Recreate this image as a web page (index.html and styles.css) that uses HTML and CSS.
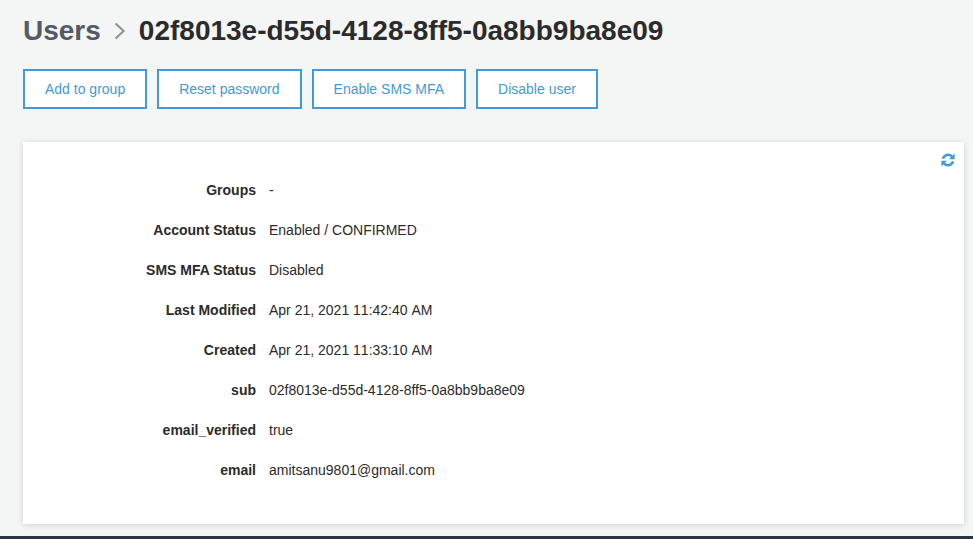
FILE: index.html
```html
<!DOCTYPE html>
<html lang="en">
<head>
    <meta charset="UTF-8">
    <meta name="viewport" content="width=device-width, initial-scale=1.0">
    <title>User details</title>
    <link rel="stylesheet" href="styles.css">
</head>
<body>
    <div class="content">
        <h1 class="crumbs">
            <span class="crumb-parent">Users</span>
            <svg class="crumb-sep" width="12" height="18" viewBox="0 0 12 18"><path d="M1.6 1.6l8 7.4-8 7.4" fill="none" stroke="#879196" stroke-width="2"/></svg>
            <span>02f8013e-d55d-4128-8ff5-0a8bb9ba8e09</span>
        </h1>
        <div class="actions">
            <button class="btn">Add to group</button>
            <button class="btn">Reset password</button>
            <button class="btn">Enable SMS MFA</button>
            <button class="btn">Disable user</button>
        </div>
        <div class="card">
            <svg class="refresh" width="14" height="14" viewBox="0 0 14 14">
                <path d="M2 5.8A5.2 5.2 0 0 1 11 3.6" fill="none" stroke="#3f9ddb" stroke-width="2.6"/>
                <path d="M13.6 .6v5.6H8z" fill="#3f9ddb"/>
                <path d="M12 8.2A5.2 5.2 0 0 1 3 10.4" fill="none" stroke="#3f9ddb" stroke-width="2.6"/>
                <path d="M.4 13.4V7.8H6z" fill="#3f9ddb"/>
            </svg>
            <dl class="attrs">
                <dt>Groups</dt><dd>-</dd>
                <dt>Account Status</dt><dd>Enabled / CONFIRMED</dd>
                <dt>SMS MFA Status</dt><dd>Disabled</dd>
                <dt>Last Modified</dt><dd class="date">Apr 21, 2021 11:42:40 AM</dd>
                <dt>Created</dt><dd class="date">Apr 21, 2021 11:33:10 AM</dd>
                <dt>sub</dt><dd>02f8013e-d55d-4128-8ff5-0a8bb9ba8e09</dd>
                <dt>email_verified</dt><dd>true</dd>
                <dt>email</dt><dd>amitsanu9801@gmail.com</dd>
            </dl>
        </div>
    </div>
    <div class="footer-bar"></div>
</body>
</html>
```

FILE: styles.css
```css
html, body {
    height: 100%;
}
body {
    margin: 0;
    display: flex;
    flex-direction: column;
    overflow: hidden;
    font-family: "Liberation Sans", Arial, sans-serif;
    background-color: #f4f6f6;
    color: #2b2b2b;
}
.content {
    flex: 1;
    padding: 14px 9px 0 23px;
}
.crumbs {
    display: flex;
    align-items: center;
    margin: 0;
    height: 33px;
    font-size: 28px;
    font-weight: bold;
    color: #2b2b2b;
}
.crumb-parent {
    color: #545b64;
}
.crumb-sep {
    margin: 0 13px;
}
.actions {
    display: flex;
    gap: 10px;
    margin-top: 22px;
}
.btn {
    height: 40px;
    padding: 0 20px;
    border: 2px solid #419bd9;
    background-color: #fff;
    color: #419bd9;
    font-family: inherit;
    font-size: 14px;
}
.card {
    position: relative;
    margin-top: 33px;
    height: 382px;
    padding: 28px 0 0;
    box-sizing: border-box;
    background-color: #fff;
    box-shadow: 0 1px 6px rgba(0,0,0,0.15);
}
.refresh {
    position: absolute;
    top: 11px;
    right: 9px;
}
.attrs {
    display: grid;
    grid-template-columns: 233px 1fr;
    grid-auto-rows: 40px;
    column-gap: 13px;
    margin: 0;
    font-size: 14px;
    line-height: 40px;
}
.attrs dt {
    font-weight: bold;
    text-align: right;
}
.attrs dd {
    margin: 0;
}
.attrs .date {
    font-kerning: none;
}
.footer-bar {
    height: 3px;
    background-color: #2a3541;
}
```
